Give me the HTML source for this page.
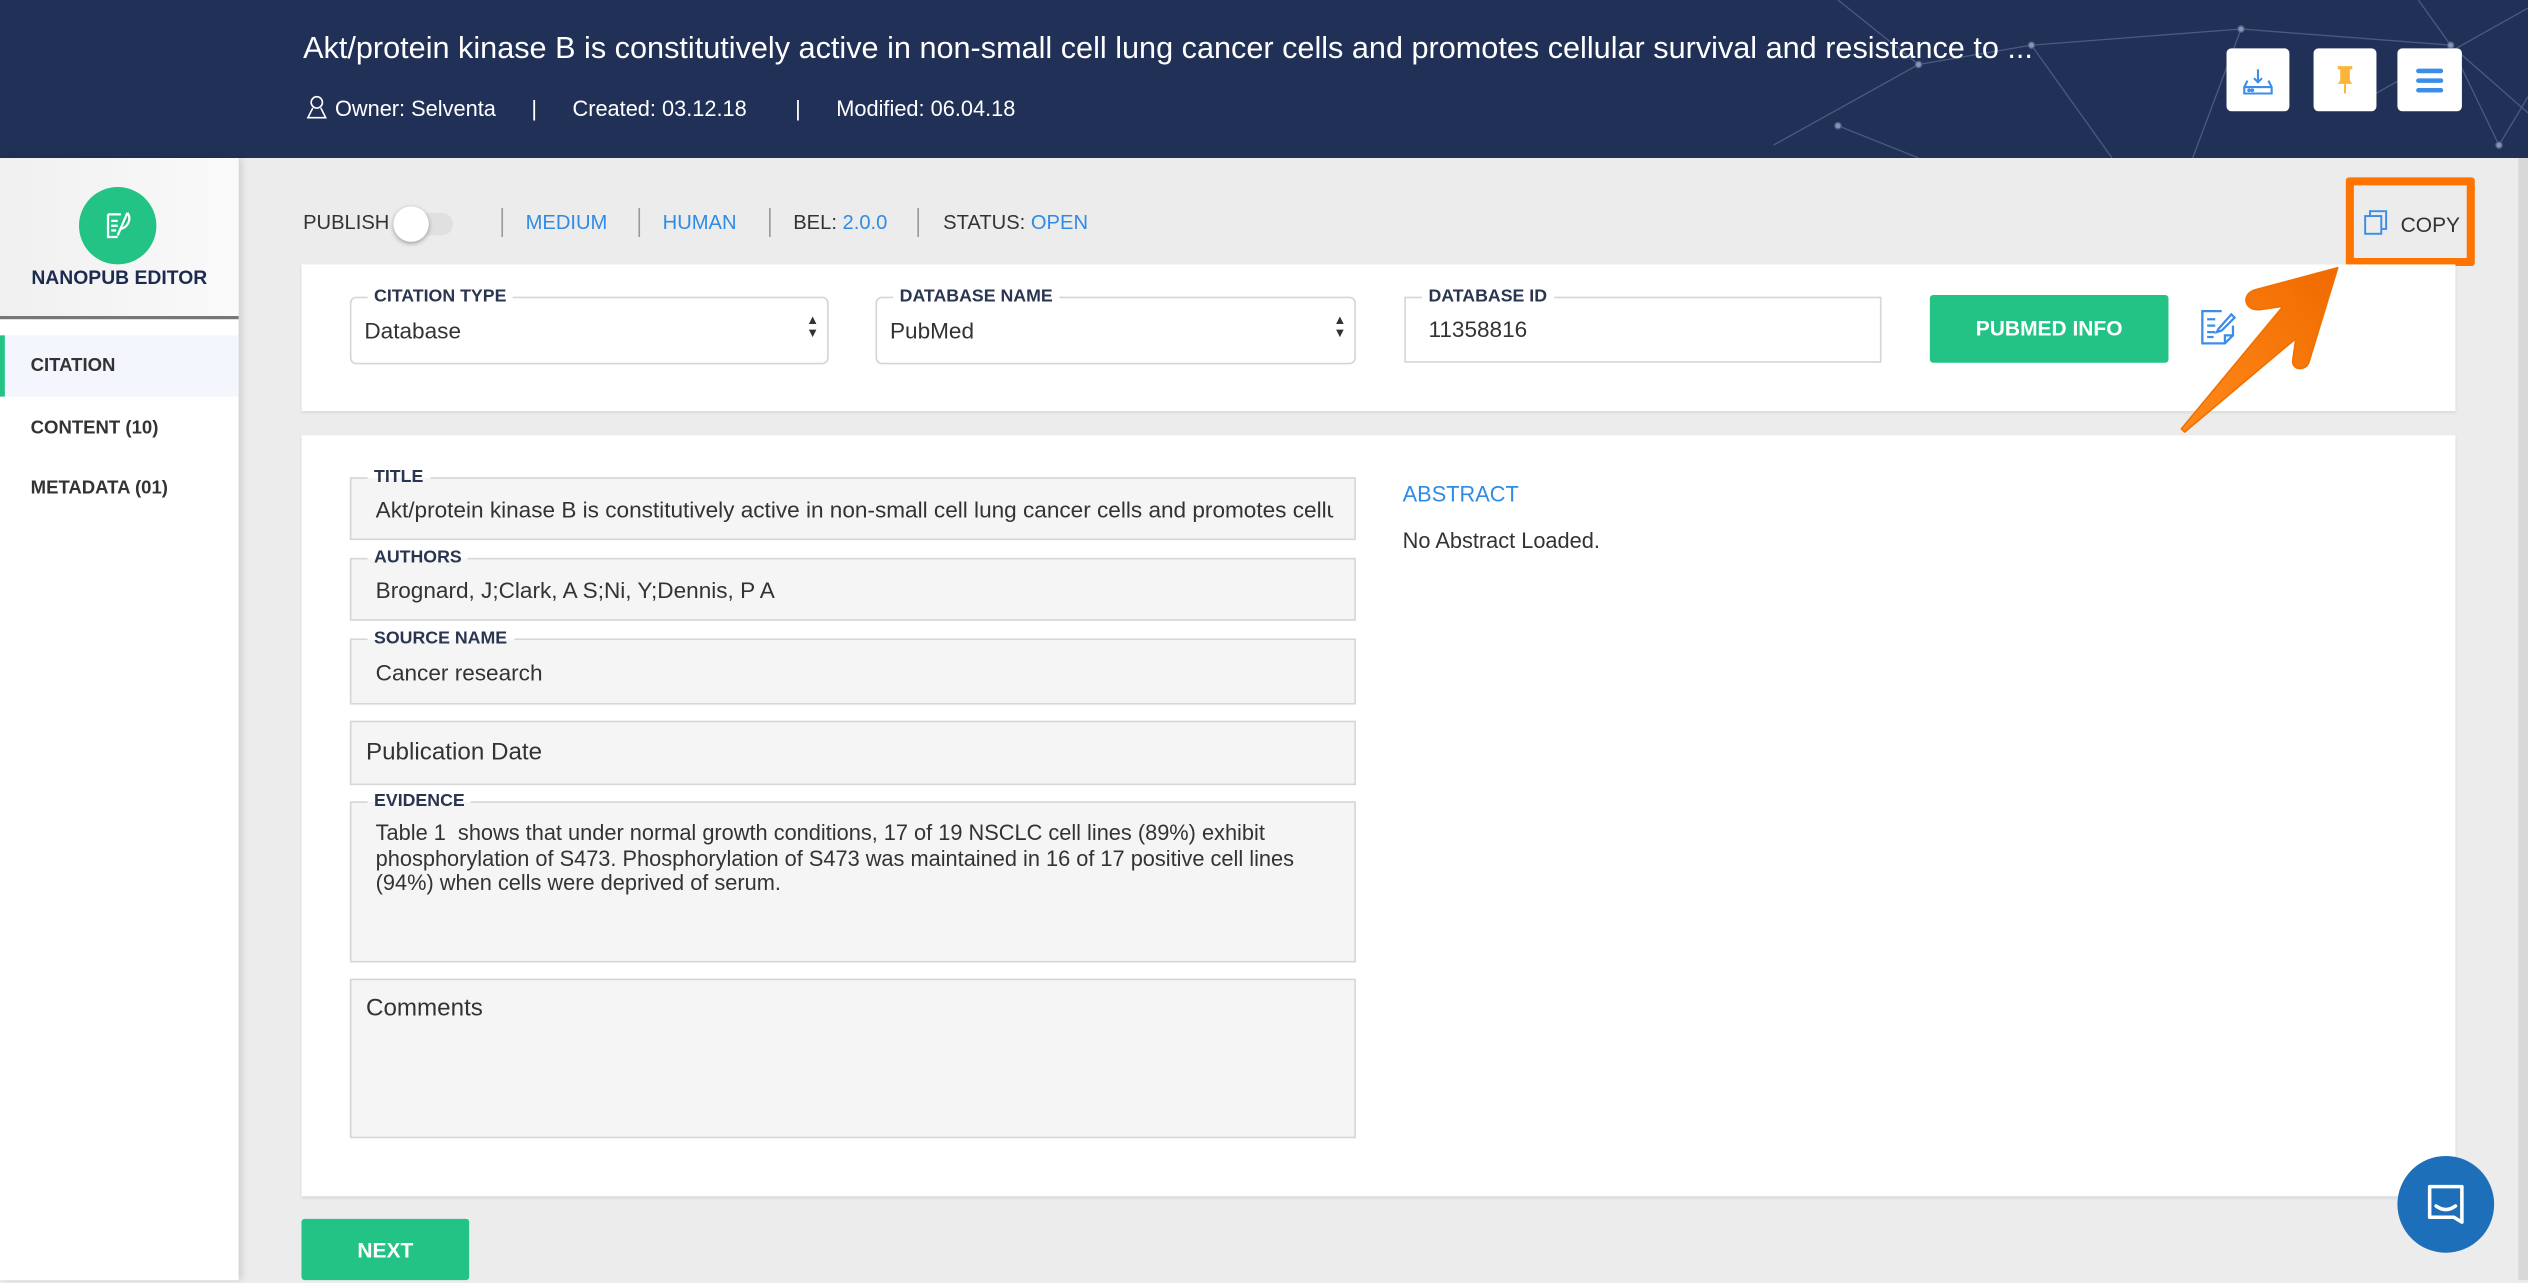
<!DOCTYPE html>
<html><head><meta charset="utf-8"><style>
*{box-sizing:border-box;margin:0;padding:0}
html,body{width:2528px;height:1280px;overflow:hidden;background:#ececec;font-family:"Liberation Sans",sans-serif}
#w{position:absolute;left:0;top:0;width:1568px;height:794px;transform:scale(1.61225);transform-origin:0 0;background:#ececec}
.a{position:absolute}
.hdr{left:0;top:0;width:1568px;height:98px;background:#213056;overflow:hidden}
.t{color:#fff}
.lbl{position:absolute;font-size:11px;font-weight:bold;color:#2a3550;background:#fff;padding:0 4px;top:-7px;left:10px;line-height:13px}
.fld{position:absolute;border:1px solid #d6d6d6;border-radius:4px;background:#fff}
.gf{position:absolute;border:1px solid #d6d6d6;background:#f5f5f5;font-size:14px;color:#333;left:217px;width:624px}
.gf .lbl{background:linear-gradient(#fff 50%,#f5f5f5 50%)}
.sep{position:absolute;top:129px;width:1px;height:18px;background:#999}
.tb{position:absolute;top:131px;font-size:12.5px;color:#333;font-weight:500}
.blue{color:#2f8be6}
</style></head><body><div id="w">
<div class="a hdr">
<svg class="a" style="left:1080px;top:0" width="488" height="98" stroke="#4a5a80" stroke-width="0.8" fill="#8893b0">
<line x1="20" y1="90" x2="110" y2="40"/><line x1="110" y1="40" x2="180" y2="28"/><line x1="180" y1="28" x2="310" y2="18"/><line x1="310" y1="18" x2="440" y2="28"/><line x1="440" y1="28" x2="488" y2="70"/><line x1="180" y1="28" x2="230" y2="98"/><line x1="310" y1="18" x2="280" y2="98"/><line x1="110" y1="40" x2="60" y2="0"/><line x1="440" y1="28" x2="470" y2="90"/><line x1="440" y1="28" x2="420" y2="0"/><line x1="470" y1="90" x2="488" y2="60"/><line x1="60" y1="78" x2="110" y2="98"/><line x1="390" y1="60" x2="488" y2="5"/>
<circle cx="110" cy="40" r="2"/><circle cx="180" cy="28" r="2"/><circle cx="310" cy="18" r="2"/><circle cx="440" cy="28" r="2"/><circle cx="470" cy="90" r="2"/><circle cx="60" cy="78" r="2"/>
</svg>
<div class="a t" style="left:188px;top:20px;font-size:19px;font-weight:500;white-space:nowrap">Akt/protein kinase B is constitutively active in non-small cell lung cancer cells and promotes cellular survival and resistance to ...</div>
<div class="a t" style="left:189px;top:59px;font-size:13.5px;white-space:nowrap">
<svg width="15" height="15" viewBox="0 0 15 15" style="vertical-align:-2px" fill="none" stroke="#fff" stroke-width="1"><circle cx="7.5" cy="4.5" r="3.5"/><path d="M5 8 L2 14 H13 L10 8"/></svg> Owner: Selventa<span style="margin:0 22px">|</span>Created: 03.12.18<span style="margin:0 22px 0 30px">|</span>Modified: 06.04.18</div>
<div class="a" style="left:1381px;top:30px;width:39px;height:39px;background:#fff;border-radius:3px"><svg width="39" height="39" fill="none" stroke="#3b8de8" stroke-width="1.3"><path d="M13 20 L11 24 V28 H28 V24 L26 20"/><line x1="11" y1="24" x2="28" y2="24"/><path d="M19.5 13 V21 M17 18.5 L19.5 21 L22 18.5"/><circle cx="14" cy="26" r=".5"/><circle cx="16" cy="26" r=".5"/></svg></div>
<div class="a" style="left:1435px;top:30px;width:39px;height:39px;background:#fff;border-radius:3px"><svg width="39" height="39"><path d="M15 11 H24 V13 H22.5 V20 L24 22 H15 L16.5 20 V13 H15Z" fill="#fbb63a"/><line x1="19.5" y1="22" x2="19.5" y2="28" stroke="#fbb63a" stroke-width="1.2"/></svg></div>
<div class="a" style="left:1487px;top:30px;width:40px;height:39px;background:#fff;border-radius:3px"><svg width="40" height="39" stroke="#3b8de8" stroke-width="2.8" stroke-linecap="round"><line x1="13" y1="14" x2="27" y2="14"/><line x1="13" y1="20" x2="27" y2="20"/><line x1="13" y1="26" x2="27" y2="26"/></svg></div>
</div>
<div class="a" style="left:1562px;top:98px;width:6px;height:696px;background:#d8d8d8"></div>
<div class="a" style="left:0;top:98px;width:148px;height:696px;background:#fff;box-shadow:2px 0 4px rgba(0,0,0,.12)"></div>
<div class="a" style="left:0;top:98px;width:148px;height:100px;background:linear-gradient(90deg,#f0f0f0,#fafafa);border-bottom:2px solid #777"></div>
<div class="a" style="left:49px;top:116px;width:48px;height:48px;border-radius:50%;background:#22c384"><svg width="48" height="48" fill="none" stroke="#fff" stroke-width="1.4"><path d="M18 17 H26 M18 17 V31 H24"/><path d="M20 21 H24 M20 24 H24 M20 27 H23"/><path d="M30 16 L24 30 M30 16 C33 20 30 25 26 26"/></svg></div>
<div class="a" style="left:0;top:165px;width:148px;text-align:center;font-size:12px;font-weight:bold;color:#1d2b50">NANOPUB EDITOR</div>
<div class="a" style="left:0;top:208px;width:148px;height:38px;background:#f3f6fc;border-left:3px solid #22c384"></div>
<div class="a" style="left:19px;top:221px;font-size:11.5px;font-weight:bold;color:#333">CITATION</div>
<div class="a" style="left:19px;top:260px;font-size:11.5px;font-weight:bold;color:#333">CONTENT (10)</div>
<div class="a" style="left:19px;top:297px;font-size:11.5px;font-weight:bold;color:#333">METADATA (01)</div>

<div class="tb" style="left:188px">PUBLISH</div>
<div class="a" style="left:245px;top:132px;width:36px;height:14px;border-radius:7px;background:#e0e0e0"></div>
<div class="a" style="left:244px;top:128px;width:22px;height:22px;border-radius:50%;background:#fff;box-shadow:0 1px 3px rgba(0,0,0,.35)"></div>
<div class="sep" style="left:311px"></div><div class="tb blue" style="left:326px">MEDIUM</div>
<div class="sep" style="left:396px"></div><div class="tb blue" style="left:411px">HUMAN</div>
<div class="sep" style="left:477px"></div><div class="tb" style="left:492px">BEL: <span class="blue">2.0.0</span></div>
<div class="sep" style="left:569px"></div><div class="tb" style="left:585px">STATUS: <span class="blue">OPEN</span></div>

<div class="a" style="left:1455px;top:110px;width:80px;height:55px;border:5px solid #ff7300;border-radius:2px"></div>
<svg class="a" style="left:1466px;top:130px" width="16" height="16" fill="none" stroke="#3b8de8" stroke-width="1.2"><rect x="1" y="4" width="10" height="11"/><path d="M4 4 V1 H14 V12 H11"/></svg>
<div class="a" style="left:1489px;top:132px;font-size:13px;color:#333">COPY</div>

<div class="a" style="left:187px;top:164px;width:1336px;height:91px;background:#fff;box-shadow:0 1px 2px rgba(0,0,0,.1)"></div>
<div class="fld" style="left:217px;top:184px;width:297px;height:42px"><span class="lbl">CITATION TYPE</span><span class="a" style="left:8px;top:12px;font-size:14px;color:#333">Database</span><span class="a" style="right:5px;top:10px;font-size:8px;line-height:8px;color:#333">▲<br>▼</span></div>
<div class="fld" style="left:543px;top:184px;width:298px;height:42px"><span class="lbl">DATABASE NAME</span><span class="a" style="left:8px;top:12px;font-size:14px;color:#333">PubMed</span><span class="a" style="right:5px;top:10px;font-size:8px;line-height:8px;color:#333">▲<br>▼</span></div>
<div class="a" style="left:871px;top:184px;width:296px;height:41px;border:1px solid #d6d6d6"><span class="lbl">DATABASE ID</span><span class="a" style="left:14px;top:11px;font-size:14px;color:#333">11358816</span></div>
<div class="a" style="left:1197px;top:183px;width:148px;height:42px;background:#22c384;border-radius:2px;color:#fff;font-size:13px;font-weight:bold;text-align:center;line-height:42px">PUBMED INFO</div>
<svg class="a" style="left:1365px;top:191px" width="22" height="24" fill="none" stroke="#3b8de8" stroke-width="1.4"><path d="M13 2 H1 V22 H15 L20 17 V11"/><path d="M15 22 V17 H20"/><path d="M4 7 H9 M4 11 H9 M4 15 H9 M4 18 H8"/><path d="M11 13 L19 4 L21 6 L13 14 L10 15Z"/></svg>

<svg class="a" style="left:1350px;top:160px" width="110" height="115"><defs><linearGradient id="og" x1="0" y1="1" x2="1" y2="0"><stop offset="0" stop-color="#ff8a1a"/><stop offset="1" stop-color="#f06a00"/></linearGradient></defs><path d="M5 108 L74 50 L72 64 C72 70 80 70 82 65 L100 6 L48 20 C40 23 42 33 52 32 L66 30 L3 106 Z" fill="url(#og)" stroke="#f27000" stroke-width="1" stroke-linejoin="round"/></svg>

<div class="a" style="left:187px;top:270px;width:1336px;height:472px;background:#fff;box-shadow:0 1px 2px rgba(0,0,0,.1)"></div>
<div class="gf" style="top:296px;height:39px"><span class="lbl">TITLE</span><span class="a" style="left:15px;top:11px;white-space:nowrap;width:594px;overflow:hidden">Akt/protein kinase B is constitutively active in non-small cell lung cancer cells and promotes cellular</span></div>
<div class="gf" style="top:346px;height:39px"><span class="lbl">AUTHORS</span><span class="a" style="left:15px;top:11px">Brognard, J;Clark, A S;Ni, Y;Dennis, P A</span></div>
<div class="gf" style="top:396px;height:41px"><span class="lbl">SOURCE NAME</span><span class="a" style="left:15px;top:12px">Cancer research</span></div>
<div class="gf" style="top:447px;height:40px"><span class="a" style="left:9px;top:10px;font-size:15px">Publication Date</span></div>
<div class="gf" style="top:497px;height:100px"><span class="lbl">EVIDENCE</span><span class="a" style="left:15px;top:11px;width:600px;font-size:13.5px;line-height:15.5px">Table 1&nbsp; shows that under normal growth conditions, 17 of 19 NSCLC cell lines (89%) exhibit phosphorylation of S473. Phosphorylation of S473 was maintained in 16 of 17 positive cell lines (94%) when cells were deprived of serum.</span></div>
<div class="gf" style="top:607px;height:99px"><span class="a" style="left:9px;top:9px;font-size:15px">Comments</span></div>
<div class="a" style="left:870px;top:299px;font-size:13.5px;font-weight:500;color:#2f8be6">ABSTRACT</div>
<div class="a" style="left:870px;top:328px;font-size:13.5px;color:#333">No Abstract Loaded.</div>

<div class="a" style="left:187px;top:756px;width:104px;height:38px;background:#22c384;border-radius:2px;color:#fff;font-size:13px;font-weight:bold;text-align:center;line-height:40px">NEXT</div>
<div class="a" style="left:1487px;top:717px;width:60px;height:60px;border-radius:50%;background:#1c6fb8"><svg width="60" height="60" fill="none" stroke="#fff" stroke-width="2.2"><path d="M20 19 H40 V41 L35 38 H20Z" stroke-linejoin="round"/><path d="M24 31 C28 34 32 34 36 31" stroke-linecap="round"/></svg></div>
</div></body></html>
